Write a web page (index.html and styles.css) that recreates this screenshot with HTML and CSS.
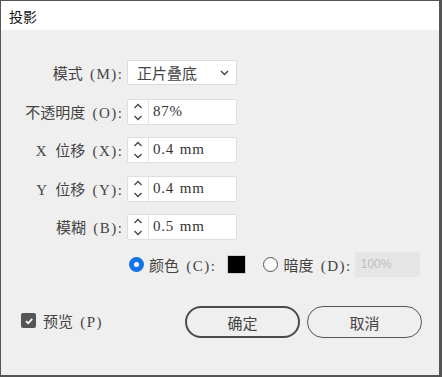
FILE: index.html
```html
<!DOCTYPE html>
<html lang="zh">
<head>
<meta charset="utf-8">
<link rel="stylesheet" href="styles.css">
</head>
<body>
<div class="window">
  <div class="titlebar">投影</div>
  <div class="content">
    <div class="form">
      <label class="lbl">模式<span class="lt"> (M):</span></label>
      <div class="select">
        <span class="sel-text">正片叠底</span>
        <svg class="chev" width="9" height="6" viewBox="0 0 9 6"><path d="M1 1 L4.5 4.5 L8 1" fill="none" stroke="#444" stroke-width="1.4"/></svg>
      </div>

      <label class="lbl">不透明度<span class="lt"> (O):</span></label>
      <div class="field">
        <div class="spin">
          <svg width="10" height="20" viewBox="0 0 10 20"><path d="M1.5 6 L5 2.5 L8.5 6" fill="none" stroke="#444" stroke-width="1.3"/><path d="M1.5 14 L5 17.5 L8.5 14" fill="none" stroke="#444" stroke-width="1.3"/></svg>
        </div>
        <span class="val">87%</span>
      </div>

      <label class="lbl"><span class="lt">X </span>位移<span class="lt"> (X):</span></label>
      <div class="field">
        <div class="spin">
          <svg width="10" height="20" viewBox="0 0 10 20"><path d="M1.5 6 L5 2.5 L8.5 6" fill="none" stroke="#444" stroke-width="1.3"/><path d="M1.5 14 L5 17.5 L8.5 14" fill="none" stroke="#444" stroke-width="1.3"/></svg>
        </div>
        <span class="val">0.4 mm</span>
      </div>

      <label class="lbl"><span class="lt">Y </span>位移<span class="lt"> (Y):</span></label>
      <div class="field">
        <div class="spin">
          <svg width="10" height="20" viewBox="0 0 10 20"><path d="M1.5 6 L5 2.5 L8.5 6" fill="none" stroke="#444" stroke-width="1.3"/><path d="M1.5 14 L5 17.5 L8.5 14" fill="none" stroke="#444" stroke-width="1.3"/></svg>
        </div>
        <span class="val">0.4 mm</span>
      </div>

      <label class="lbl">模糊<span class="lt"> (B):</span></label>
      <div class="field">
        <div class="spin">
          <svg width="10" height="20" viewBox="0 0 10 20"><path d="M1.5 6 L5 2.5 L8.5 6" fill="none" stroke="#444" stroke-width="1.3"/><path d="M1.5 14 L5 17.5 L8.5 14" fill="none" stroke="#444" stroke-width="1.3"/></svg>
        </div>
        <span class="val">0.5 mm</span>
      </div>
    </div>

    <div class="radio-row">
      <span class="radio checked"></span>
      <span class="rtext">颜色<span class="lt"> (C):</span></span>
      <span class="swatch"></span>
      <span class="radio"></span>
      <span class="rtext">暗度<span class="lt"> (D):</span></span>
      <div class="disabled-field">100%</div>
    </div>

    <div class="bottom-row">
      <div class="preview">
        <span class="checkbox">
          <svg width="10" height="10" viewBox="0 0 10 10"><path d="M2 5.2 L4.2 7.3 L8.2 2.8" fill="none" stroke="#fff" stroke-width="1.8"/></svg>
        </span>
        <span class="ptext">预览<span class="lt"> (P)</span></span>
      </div>
      <div class="buttons">
        <button class="btn primary">确定</button>
        <button class="btn">取消</button>
      </div>
    </div>
  </div>
</div>
</body>
</html>
```
FILE: styles.css
```css
html, body {
  margin: 0;
  padding: 0;
  background: #4a4a4a;
}
.window {
  width: 442px;
  height: 377px;
  box-sizing: border-box;
  border-style: solid;
  border-color: #555;
  border-width: 1px 3px 2px 1px;
  background: #efefef;
  display: flex;
  flex-direction: column;
  font-family: "Noto Sans CJK SC", sans-serif;
  color: #444;
}
.titlebar {
  height: 29px;
  background: #fff;
  font-size: 14px;
  color: #111;
  padding-left: 8px;
  display: flex;
  align-items: center;
  box-sizing: border-box;
}
.content {
  flex: 1;
  padding-top: 30px;
}
.lt {
  font-family: "Liberation Serif", serif;
  font-size: 15px;
  letter-spacing: 1.5px;
  word-spacing: 2px;
}
.form {
  display: grid;
  grid-template-columns: 118px 110px;
  column-gap: 5px;
  row-gap: 12.5px;
  padding-left: 3px;
}
.lbl {
  font-size: 15px;
  text-align: right;
  height: 26px;
  line-height: 26px;
  white-space: pre;
  color: #444;
  margin-right: -1.5px;
}
.select {
  height: 25px;
  box-sizing: border-box;
  background: #fff;
  border: 1px solid #dcdcdc;
  border-radius: 2px;
  display: flex;
  align-items: center;
  justify-content: space-between;
  padding: 0 7px 0 9px;
}
.sel-text {
  font-size: 15px;
  color: #444;
}
.field {
  height: 26px;
  box-sizing: border-box;
  background: #fff;
  border: 1px solid #dedede;
  border-radius: 2px;
  display: flex;
  align-items: stretch;
}
.spin {
  width: 20px;
  border-right: 1px solid #e4e4e4;
  display: flex;
  align-items: center;
  justify-content: center;
}
.val {
  font-family: "Liberation Serif", serif;
  font-size: 15px;
  letter-spacing: 0.8px;
  word-spacing: 1px;
  color: #333;
  padding-left: 4px;
  line-height: 23px;
  white-space: pre;
}
.radio-row {
  display: flex;
  align-items: center;
  margin-top: 12px;
  padding-left: 128px;
  height: 25px;
}
.radio {
  width: 15px;
  height: 15px;
  box-sizing: border-box;
  border-radius: 50%;
  border: 1.5px solid #555;
  background: #fafafa;
  margin-right: 5px;
  flex: none;
}
.radio.checked {
  border: 5px solid #1473e6;
  background: #fff;
}
.rtext {
  font-size: 15px;
  color: #444;
  white-space: pre;
}
.swatch {
  width: 19px;
  height: 19px;
  box-sizing: border-box;
  background: #000;
  border: 1px solid #d0d0d0;
  margin-left: 11px;
  margin-right: 17px;
  flex: none;
}
.disabled-field {
  width: 65px;
  height: 25px;
  box-sizing: border-box;
  background: #e5e5e5;
  border-radius: 2px;
  margin-left: 3px;
  font-family: "Liberation Sans", sans-serif;
  font-size: 12px;
  color: #bdbdbd;
  padding-left: 6px;
  line-height: 25px;
  flex: none;
}
.bottom-row {
  display: flex;
  align-items: center;
  justify-content: space-between;
  margin-top: 29px;
  padding-left: 20px;
  padding-right: 17px;
}
.preview {
  display: flex;
  align-items: center;
  margin-top: -3px;
}
.checkbox {
  width: 15px;
  height: 15px;
  background: #555;
  border-radius: 2px;
  display: flex;
  align-items: center;
  justify-content: center;
  margin-right: 7px;
}
.ptext {
  font-size: 15px;
  color: #444;
  white-space: pre;
}
.buttons {
  display: flex;
  gap: 7px;
}
.btn {
  width: 115px;
  height: 32px;
  box-sizing: border-box;
  border-radius: 16px;
  background: transparent;
  border: 1.5px solid #555;
  font-family: "Noto Sans CJK SC", sans-serif;
  font-size: 15px;
  color: #444;
  padding: 0;
}
.btn.primary {
  border: 2.5px solid #4b4b4b;
}
```
